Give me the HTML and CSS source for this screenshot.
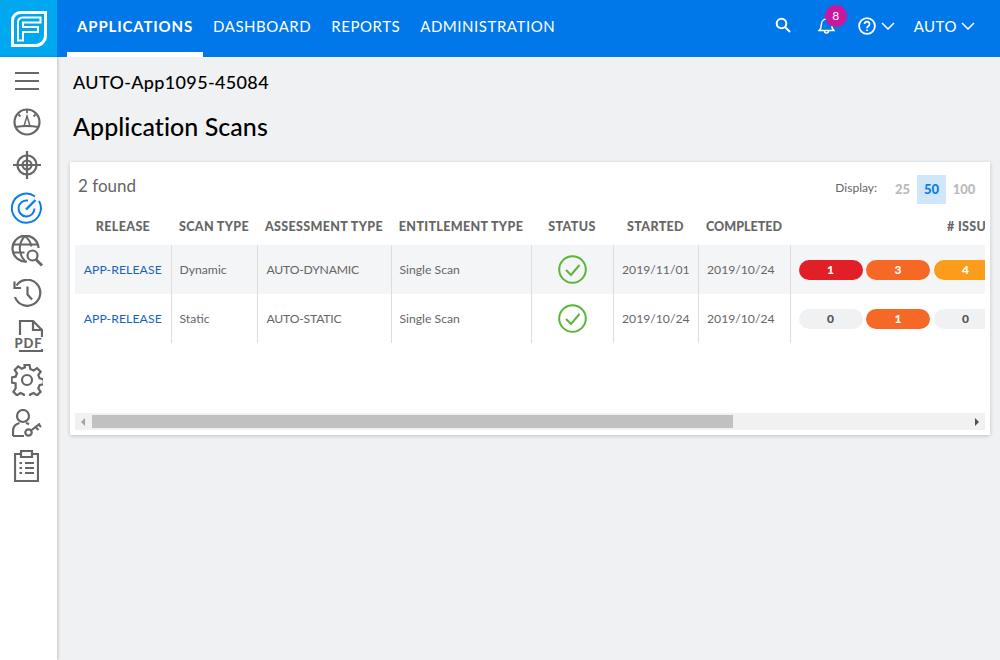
FILE: index.html
```html
<!DOCTYPE html>
<html lang="en">
  <head>
    <meta charset="UTF-8" />
    <title>Application Scans</title>
    <link rel="stylesheet" href="styles.css">
  </head>
  <body>
    <header class="topbar">
      <a class="logo" href="#">
        <svg width="36" height="36" viewBox="0 0 36 36">
          <path d="M1.500 9.500a8 8 0 0 1 8-8h25v23a10 10 0 0 1-10 10h-23z" fill="none" stroke="#fff" stroke-width="3"/>
          <path d="M7 29.500V11a4.500 4.500 0 0 1 4.500-4.500H29.500V11.500H12V16H27V21H12V29.500z" fill="none" stroke="#fff" stroke-width="2"/>
        </svg>
      </a>
      <nav class="nav">
        <a class="nav-item active" href="#">APPLICATIONS</a>
        <a class="nav-item" href="#">DASHBOARD</a>
        <a class="nav-item" href="#">REPORTS</a>
        <a class="nav-item" href="#">ADMINISTRATION</a>
      </nav>
      <div class="tools">
        <svg class="tool-search" width="16" height="16" viewBox="0 0 16 16" fill="none" stroke="#fff" stroke-width="2">
          <circle cx="6.500" cy="6.500" r="4.800"/><path d="M10 10l5 5"/>
        </svg>
        <div class="bell">
          <svg width="17" height="16" viewBox="0 0 17 16" fill="none" stroke="#fff" stroke-width="1.500">
            <path d="M1 12.500c2-1.500 2.300-3 2.300-5.500C3.300 3.500 5.500 1 8.500 1s5.200 2.500 5.200 6c0 2.500.3 4 2.300 5.500z"/><path d="M6.500 13a2 2 0 0 0 4 0"/>
          </svg>
          <span class="badge">8</span>
        </div>
        <div class="help">
          <svg width="18" height="18" viewBox="0 0 18 18" fill="none" stroke="#fff" stroke-width="1.800">
            <circle cx="9" cy="9" r="7.900"/><path d="M6.500 7a2.500 2.500 0 1 1 3.800 2.200c-.9.500-1.300 1-1.300 2"/><path d="M9 12.500v1.600"/>
          </svg>
          <svg class="chev" width="14" height="8" viewBox="0 0 14 8" fill="none" stroke="#fff" stroke-width="1.500"><path d="M1 1l6 6 6-6"/></svg>
        </div>
        <div class="user">
          <span>AUTO</span>
          <svg class="chev" width="14" height="8" viewBox="0 0 14 8" fill="none" stroke="#fff" stroke-width="1.500"><path d="M1 1l6 6 6-6"/></svg>
        </div>
      </div>
    </header>

    <div class="page">
      <aside class="sidebar">
        <a class="side-item side-menu" href="#">
          <svg width="24" height="18" viewBox="0 0 24 18" fill="none" stroke="#666" stroke-width="2"><path d="M0 1h24M0 9h24M0 17h24"/></svg>
        </a>
        <a class="side-item" href="#">
          <svg width="28" height="28" viewBox="0 0 28 28" fill="none" stroke="#666" stroke-width="2.200">
            <circle cx="14" cy="14" r="12.500"/><path d="M2.500 19q11.500-2 23 0"/><path d="M11 18L14 8l3 10" stroke-width="1.500"/><path d="M14 2v3M5.500 6.500l2 2M22.500 6.500l-2 2" stroke-width="1.800"/>
          </svg>
        </a>
        <a class="side-item" href="#">
          <svg width="28" height="28" viewBox="0 0 28 28" fill="none" stroke="#666" stroke-width="2.200">
            <circle cx="14" cy="14" r="9.500"/><circle cx="14" cy="14" r="4.500"/><path d="M14 0v28M0 14h28"/>
          </svg>
        </a>
        <a class="side-item" href="#">
          <svg width="32" height="32" viewBox="0 0 32 32" fill="none" stroke="#0a7cf0" stroke-width="2">
            <path d="M24 4.500A14.500 14.500 0 1 0 28 9"/><path d="M17 8.600a8 8 0 1 0 6.500 8"/><path d="M15 17.500L24.500 8" stroke-width="2.400"/>
          </svg>
        </a>
        <a class="side-item" href="#">
          <svg width="33" height="32" viewBox="0 0 33 32" fill="none" stroke="#666" stroke-width="2.200">
            <path d="M16 26.500A13 13 0 1 1 27.500 13"/><path d="M14 1c-7 7-7 18 0 25M14 1c4 3.500 6 7 6.300 10.500M1.500 9.500h25M1.500 17.500h12" stroke-width="2"/><circle cx="21.500" cy="20.500" r="5"/><path d="M25 24.500l6 6" stroke-width="2.800"/>
          </svg>
        </a>
        <a class="side-item" href="#">
          <svg width="29" height="29" viewBox="0 0 29 29" fill="none" stroke="#666" stroke-width="2.200">
            <path d="M3.500 6.500A13 13 0 1 1 2 18"/><path d="M1.500 2.500V9h6.500"/><path d="M14.500 7.500v8l4.500 5"/>
          </svg>
        </a>
        <a class="side-item" href="#">
          <div class="pdf-icon">
            <svg width="31" height="33" viewBox="0 0 31 33" fill="none" stroke="#666" stroke-width="2.200">
              <path d="M8 15V1h13l9 9v21H8v-1"/><path d="M21 1v9h9"/>
            </svg>
            <span class="pdf-label">PDF</span>
          </div>
        </a>
        <a class="side-item" href="#">
          <svg width="32" height="32" viewBox="0 0 32 32" fill="none" stroke="#666" stroke-width="2.200">
            <path d="M13.500 1h5l.8 4 3.300 1.400 3.500-2.300 3.500 3.500-2.300 3.500 1.400 3.300 4 .8v5l-4 .8-1.400 3.300 2.300 3.500-3.500 3.500-3.500-2.300-3.300 1.400-.8 4h-5l-.8-4-3.300-1.400-3.500 2.300-3.500-3.500 2.300-3.500L4.600 19.300l-4-.8v-5l4-.8 1.400-3.300-2.300-3.500 3.500-3.500 3.500 2.300 3.300-1.400z"/><circle cx="16" cy="16" r="5"/>
          </svg>
        </a>
        <a class="side-item" href="#">
          <svg width="30" height="28" viewBox="0 0 30 28" fill="none" stroke="#666" stroke-width="2.200">
            <circle cx="11" cy="7" r="6"/><path d="M1 27v-5c0-5 3-7 6.500-8M14 14c1 .3 2 .7 3 1.300M1 27h11"/><circle cx="16.500" cy="23.500" r="3.200"/><path d="M19 21.500l9-7M24 18.500l2.500 2.500M27 16l2 2"/>
          </svg>
        </a>
        <a class="side-item" href="#">
          <svg class="clipboard" width="25" height="32" viewBox="0 0 25 32" fill="none" stroke="#666" stroke-width="2.200">
            <path d="M7 4H1v27h23V4h-6"/><path d="M7 1h11v6H7z"/><path d="M5.500 13h2.500M11 13h9M5.500 18h2.500M11 18h9M5.500 23h2.500M11 23h9"/>
          </svg>
        </a>
      </aside>

      <main class="content">
        <div class="app-name">AUTO-App1095-45084</div>
        <h1 class="title">Application Scans</h1>

        <section class="card">
          <div class="card-head">
            <span class="found">2 found</span>
            <div class="display">
              <span class="display-label">Display:</span>
              <span class="page-size">25</span>
              <span class="page-size selected">50</span>
              <span class="page-size wide">100</span>
            </div>
          </div>
          <div class="table-wrap">
            <table class="scans">
              <colgroup>
                <col class="c-release" />
                <col class="c-type" />
                <col class="c-assess" />
                <col class="c-entitle" />
                <col class="c-status" />
                <col class="c-started" />
                <col class="c-completed" />
                <col class="c-issues" />
                <col class="c-rest" />
              </colgroup>
              <thead>
                <tr>
                  <th>RELEASE</th>
                  <th>SCAN TYPE</th>
                  <th>ASSESSMENT TYPE</th>
                  <th>ENTITLEMENT TYPE</th>
                  <th>STATUS</th>
                  <th>STARTED</th>
                  <th class="th-tight">COMPLETED</th>
                  <th># ISSUES</th>
                  <th></th>
                </tr>
              </thead>
              <tbody>
                <tr class="odd">
                  <td><a href="#">APP-RELEASE</a></td>
                  <td>Dynamic</td>
                  <td class="code">AUTO-DYNAMIC</td>
                  <td>Single Scan</td>
                  <td class="status">
                    <svg width="29" height="29" viewBox="0 0 29 29" fill="none" stroke="#5db43a" stroke-width="2"><circle cx="14.500" cy="14.500" r="13.300"/><path d="M8 15l5 5 8.500-10"/></svg>
                  </td>
                  <td class="date">2019/11/01</td>
                  <td class="date">2019/10/24</td>
                  <td class="issues">
                    <div class="pills">
                      <span class="pill critical">1</span>
                      <span class="pill high">3</span>
                      <span class="pill medium">4</span>
                    </div>
                  </td>
                  <td></td>
                </tr>
                <tr>
                  <td><a href="#">APP-RELEASE</a></td>
                  <td>Static</td>
                  <td class="code">AUTO-STATIC</td>
                  <td>Single Scan</td>
                  <td class="status">
                    <svg width="29" height="29" viewBox="0 0 29 29" fill="none" stroke="#5db43a" stroke-width="2"><circle cx="14.500" cy="14.500" r="13.300"/><path d="M8 15l5 5 8.500-10"/></svg>
                  </td>
                  <td class="date">2019/10/24</td>
                  <td class="date">2019/10/24</td>
                  <td class="issues">
                    <div class="pills">
                      <span class="pill">0</span>
                      <span class="pill high">1</span>
                      <span class="pill">0</span>
                    </div>
                  </td>
                  <td></td>
                </tr>
              </tbody>
            </table>
          </div>
          <div class="scrollbar">
            <span class="arrow arrow-left"></span>
            <div class="scroll-track"><div class="scroll-thumb"></div></div>
            <span class="arrow arrow-right"></span>
          </div>
        </section>
      </main>
    </div>
  </body>
</html>
```

FILE: styles.css
```css
* {
  box-sizing: border-box;
}
html,
body {
  height: 100%;
  margin: 0;
  overflow: hidden;
}
body {
  display: flex;
  flex-direction: column;
  background: #f0f1f3;
  font-family: Lato, "Open Sans", sans-serif;
  color: #666;
}
a {
  text-decoration: none;
}

/* top bar */
.topbar {
  display: flex;
  flex: none;
  height: 57px;
  background: #0078ea;
  color: #fff;
}
.logo {
  display: flex;
  align-items: center;
  justify-content: center;
  width: 57px;
  background: #00a8f0;
}
.nav {
  display: flex;
  margin-left: 10px;
}
.nav-item {
  display: flex;
  align-items: center;
  padding: 0 10px 1px;
  border-bottom: 5px solid transparent;
  color: #fff;
  font-size: 15px;
  letter-spacing: 0.55px;
}
.nav-item.active {
  border-bottom-color: #fff;
  font-weight: 700;
  letter-spacing: 0.85px;
}
.tools {
  display: flex;
  align-items: center;
  margin-left: auto;
  padding: 0 25px 5px 0;
}
.tool-search {
  margin-right: 27px;
  margin-top: -3px;
}
.bell {
  position: relative;
  display: flex;
  margin-right: 23px;
}
.badge {
  position: absolute;
  top: -13px;
  left: 7px;
  width: 22px;
  height: 22px;
  border-radius: 50%;
  background: #c9179e;
  font-size: 12px;
  line-height: 22px;
  text-align: center;
}
.help {
  display: flex;
  align-items: center;
  gap: 5px;
  margin-right: 19px;
}
.user {
  display: flex;
  align-items: center;
  gap: 4px;
  font-size: 15px;
  letter-spacing: 0.5px;
}

/* layout */
.page {
  display: flex;
  flex: 1;
  min-height: 0;
}
.sidebar {
  display: flex;
  flex: none;
  flex-direction: column;
  width: 57px;
  padding-top: 4px;
  padding-right: 3px;
  background: #fff;
  box-shadow: 1px 0 3px rgba(0, 0, 0, 0.2);
}
.side-item {
  display: flex;
  flex: none;
  align-items: center;
  justify-content: center;
  height: 43px;
}
.side-menu {
  height: 39px;
}
.clipboard {
  margin-right: 2px;
}
.pdf-icon {
  position: relative;
  width: 31px;
  height: 33px;
}
.pdf-label {
  position: absolute;
  left: 2px;
  bottom: 4px;
  padding: 0 1px;
  background: #fff;
  font-size: 13px;
  font-weight: 900;
  line-height: 12px;
  letter-spacing: 0.9px;
  color: #666;
}
.content {
  flex: 1;
  min-width: 0;
  padding: 0 10px 0 13px;
}
.app-name {
  margin-top: 14px;
  padding-left: 3px;
  font-size: 18px;
  font-weight: 500;
  line-height: 22px;
  letter-spacing: 0.35px;
  color: #000;
}
.title {
  margin: 19px 0 22px;
  padding-left: 3px;
  font-size: 25px;
  font-weight: 500;
  line-height: 28px;
  letter-spacing: 0.05px;
  color: #000;
}

/* card */
.card {
  padding: 0 5px 5px;
  background: #fff;
  box-shadow: 0 1px 4px rgba(0, 0, 0, 0.2);
}
.card-head {
  display: flex;
  align-items: center;
  justify-content: space-between;
  height: 45px;
  padding: 4px 0 0 3px;
}
.found {
  font-size: 17px;
  line-height: 22px;
  margin-bottom: 2px;
}
.display {
  display: flex;
  align-items: center;
  margin-top: 6px;
  margin-right: 3px;
}
.display-label {
  margin-right: 11px;
  margin-top: -4px;
  font-size: 12px;
}
.page-size {
  width: 29px;
  height: 29px;
  font-size: 13px;
  font-weight: 900;
  line-height: 29px;
  text-align: center;
  color: #bbb;
}
.page-size.wide {
  width: 36px;
}
.page-size.selected {
  background: #cfe6fb;
  color: #0a7cf0;
}
.table-wrap {
  height: 206px;
  overflow: hidden;
}

/* scrollbar, drawn because the table is wider than the card */
.scrollbar {
  display: flex;
  align-items: center;
  height: 17px;
  background: #f1f1f1;
}
.arrow {
  flex: none;
  width: 17px;
  display: flex;
  justify-content: center;
}
.arrow::before {
  content: "";
  border-top: 4px solid transparent;
  border-bottom: 4px solid transparent;
}
.arrow-left {
  padding-right: 2px;
}
.arrow-left::before {
  border-right: 4px solid #a3a3a3;
}
.arrow-right::before {
  border-left: 4px solid #505050;
}
.scroll-track {
  flex: 1;
}
.scroll-thumb {
  width: 641px;
  height: 13px;
  background: #c1c1c1;
}

/* table */
.scans {
  width: 1244px;
  table-layout: fixed;
  border-collapse: collapse;
  font-size: 12.2px;
}
.c-release { width: 96px; }
.c-type { width: 86px; }
.c-assess { width: 134px; }
.c-entitle { width: 140px; }
.c-status { width: 82px; }
.c-started { width: 85px; }
.c-completed { width: 92px; }
.c-issues { width: 368px; }
.c-rest { width: 161px; }
.scans th {
  height: 38px;
  padding: 0;
  font-size: 12.5px;
  font-weight: 900;
  letter-spacing: 0.35px;
  color: #666;
  text-align: center;
  white-space: nowrap;
}
.scans th.th-tight {
  letter-spacing: 0;
}
.scans td {
  height: 49px;
  padding: 0 8px;
  border-right: 1px solid #ddd;
  white-space: nowrap;
}
.scans td:first-child {
  text-align: center;
}
.scans td:nth-last-child(2),
.scans td:last-child {
  border-right: 0;
}
.scans td a {
  color: #1a63bd;
  letter-spacing: 0.1px;
}
.scans td.code {
  padding-left: 9px;
  letter-spacing: -0.2px;
}
.scans td.date {
  padding-left: 8.500px;
}
.odd td {
  background: #f4f5f7;
}
.scans td.status {
  padding: 0;
  text-align: center;
}
.scans td.status svg {
  display: block;
  margin: 0 auto;
}
.pills {
  display: flex;
  gap: 3.500px;
}
.pill {
  flex: none;
  width: 64px;
  height: 20px;
  border-radius: 10px;
  background: #f0f1f3;
  font-size: 12px;
  font-weight: 900;
  line-height: 20px;
  text-align: center;
  color: #555;
}
.critical {
  background: #e11f27;
  color: #fff;
}
.high {
  background: #f66826;
  color: #fff;
}
.medium {
  background: #fb9c1a;
  color: #fff;
}
```
